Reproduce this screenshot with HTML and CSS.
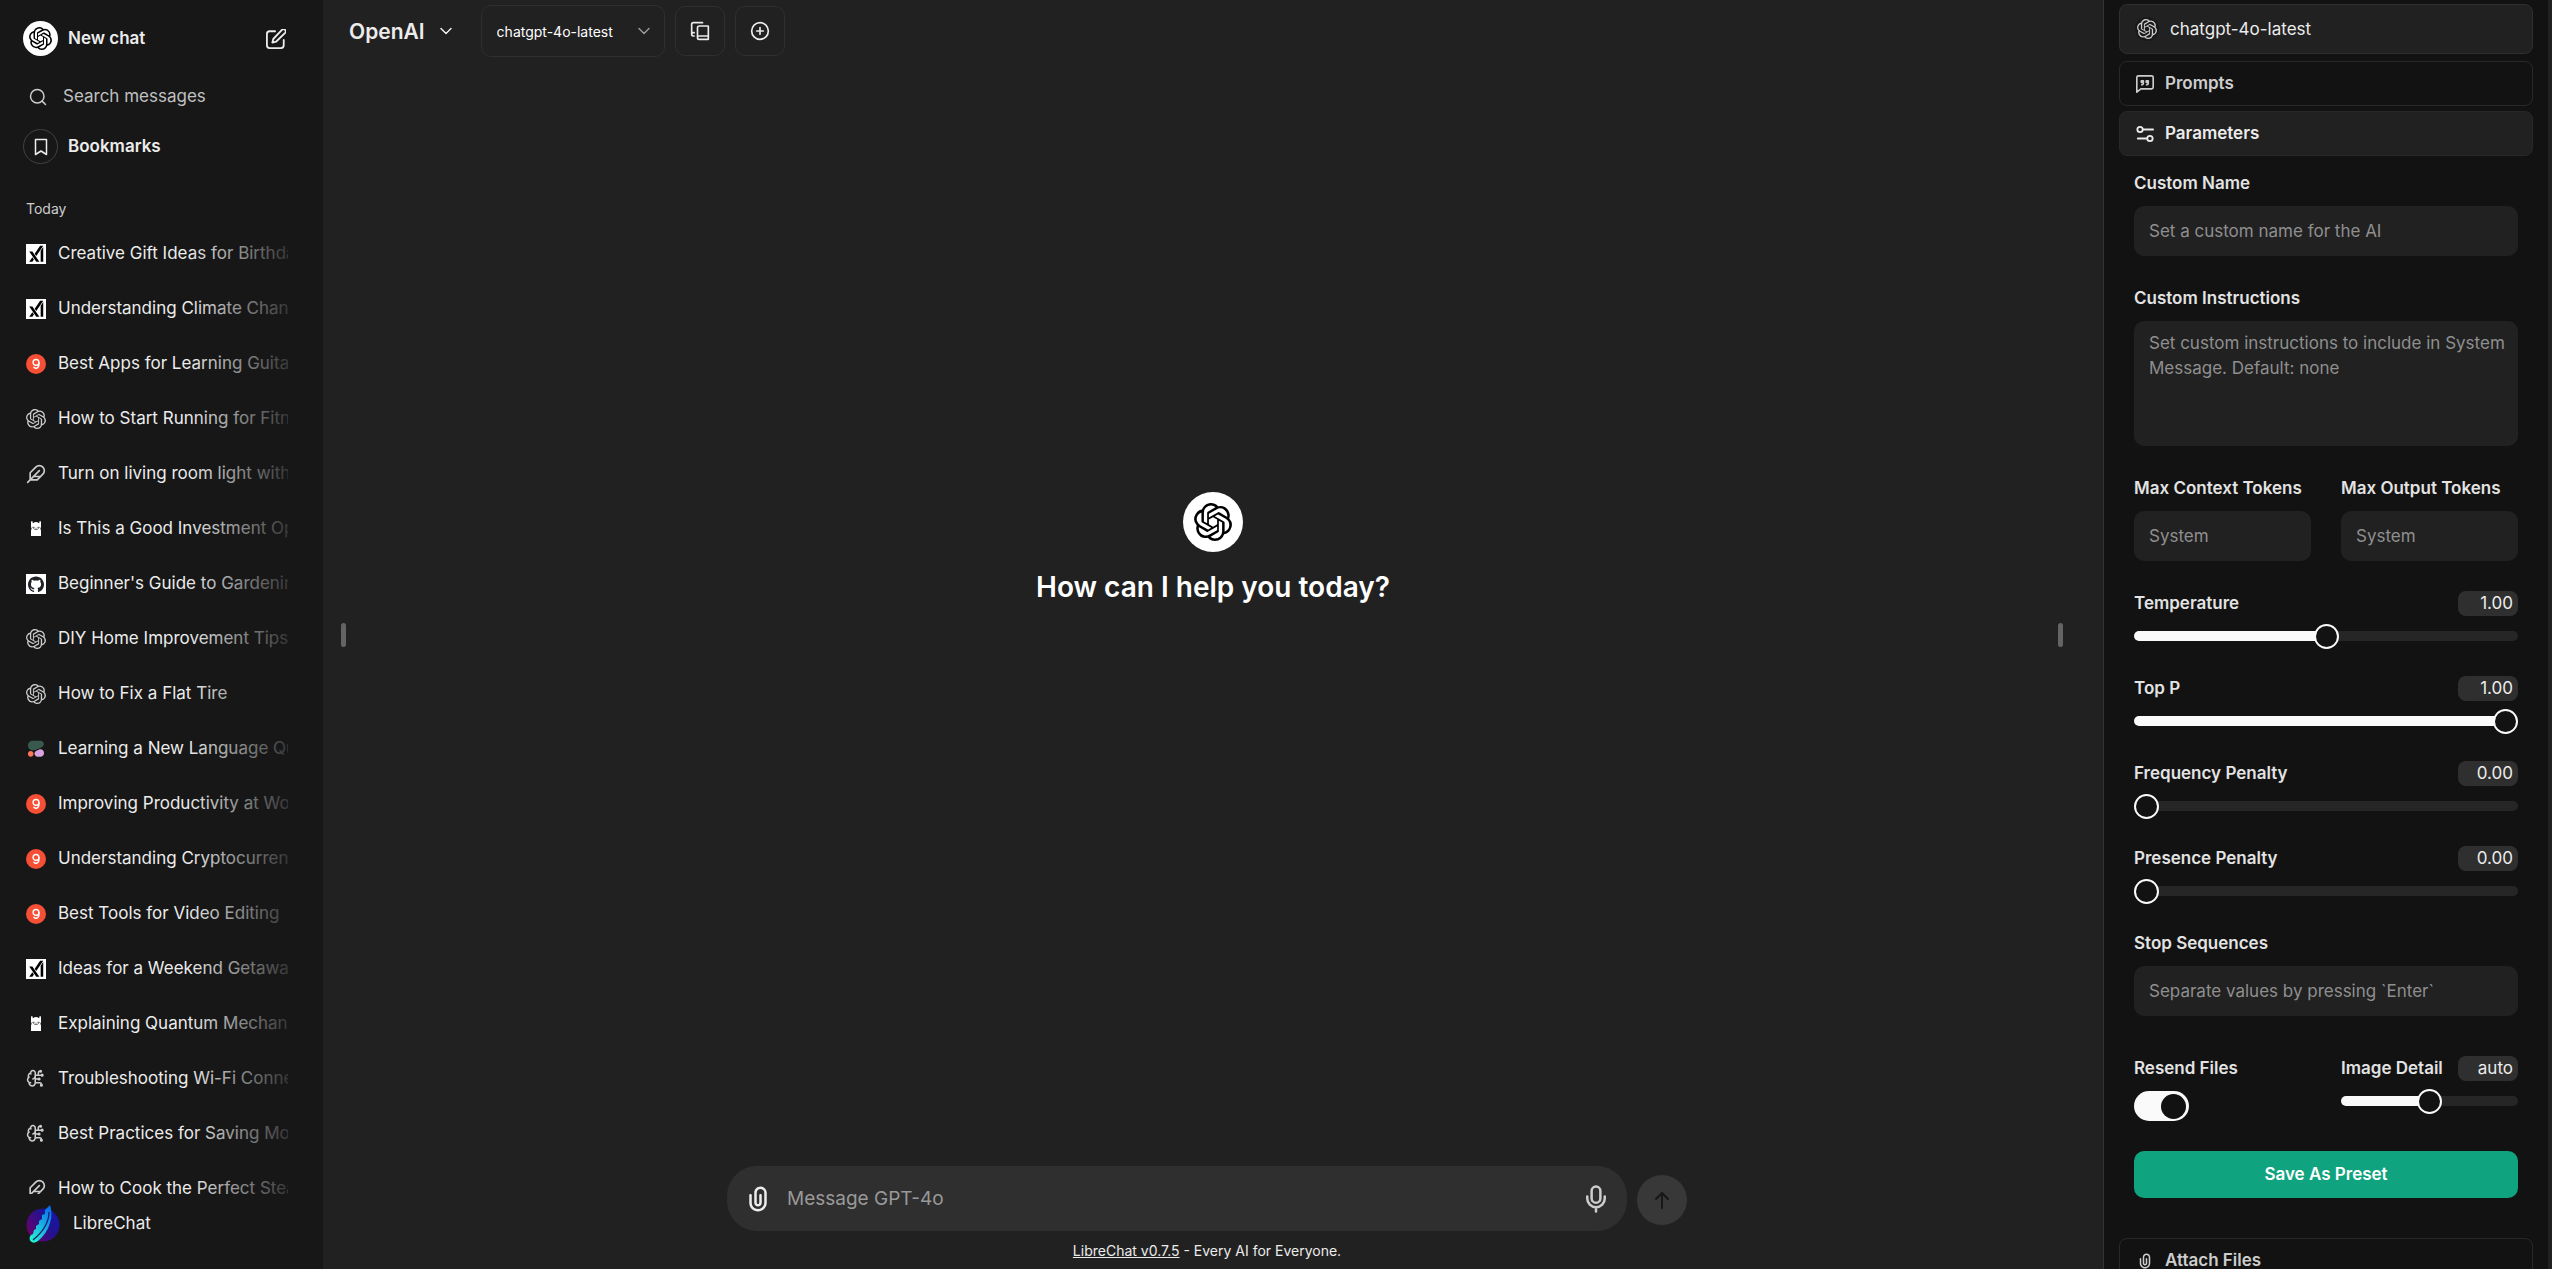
FILE: index.html
```html
<!DOCTYPE html>
<html lang="en">
<head>
<meta charset="utf-8">
<meta name="viewport" content="width=device-width, initial-scale=1">
<title>LibreChat</title>
<link rel="stylesheet" href="styles.css">
</head>
<body>
<svg class="sprite" aria-hidden="true">
  <defs>
    <linearGradient id="orb" x1="0" y1="0.8" x2="1" y2="0.2"><stop offset="0" stop-color="#70006a"/><stop offset="0.6" stop-color="#23128e"/><stop offset="1" stop-color="#1616a8"/></linearGradient>
    <linearGradient id="quill" x1="0.1" y1="1" x2="0.8" y2="0"><stop offset="0" stop-color="#21facf"/><stop offset="0.5" stop-color="#19b5e0"/><stop offset="1" stop-color="#0970ef"/></linearGradient>
  </defs>
  <symbol id="openai" viewBox="0 0 24 24"><path fill="currentColor" d="M22.2819 9.8211a5.9847 5.9847 0 0 0-.5157-4.9108 6.0462 6.0462 0 0 0-6.5098-2.9A6.0651 6.0651 0 0 0 4.9807 4.1818a5.9847 5.9847 0 0 0-3.9977 2.9 6.0462 6.0462 0 0 0 .7427 7.0966 5.98 5.98 0 0 0 .511 4.9107 6.051 6.051 0 0 0 6.5146 2.9001A5.9847 5.9847 0 0 0 13.2599 24a6.0557 6.0557 0 0 0 5.7718-4.2058 5.9894 5.9894 0 0 0 3.9977-2.9001 6.0557 6.0557 0 0 0-.7475-7.073zm-9.022 12.6081a4.4755 4.4755 0 0 1-2.8764-1.0408l.1419-.0804 4.7783-2.7582a.7948.7948 0 0 0 .3927-.6813v-6.7369l2.02 1.1686a.071.071 0 0 1 .038.052v5.5826a4.504 4.504 0 0 1-4.4945 4.4944zm-9.6607-4.1254a4.4708 4.4708 0 0 1-.5346-3.0137l.142.0852 4.783 2.7582a.7712.7712 0 0 0 .7806 0l5.8428-3.3685v2.3324a.0804.0804 0 0 1-.0332.0615L9.74 19.9502a4.4992 4.4992 0 0 1-6.1408-1.6464zM2.3408 7.8956a4.485 4.485 0 0 1 2.3655-1.9728V11.6a.7664.7664 0 0 0 .3879.6765l5.8144 3.3543-2.0201 1.1685a.0757.0757 0 0 1-.071 0l-4.8303-2.7865A4.504 4.504 0 0 1 2.3408 7.872zm16.5963 3.8558L13.1038 8.364 15.1192 7.2a.0757.0757 0 0 1 .071 0l4.8303 2.7913a4.4944 4.4944 0 0 1-.6765 8.1042v-5.6772a.79.79 0 0 0-.407-.667zm2.0107-3.0231l-.142-.0852-4.7735-2.7818a.7759.7759 0 0 0-.7854 0L9.409 9.2297V6.8974a.0662.0662 0 0 1 .0284-.0615l4.8303-2.7866a4.4992 4.4992 0 0 1 6.6802 4.66zM8.3065 12.863l-2.02-1.1638a.0804.0804 0 0 1-.038-.0567V6.0742a4.4992 4.4992 0 0 1 7.3757-3.4537l-.142.0805L8.704 5.459a.7948.7948 0 0 0-.3927.6813zm1.0976-2.3654l2.602-1.4998 2.6069 1.4998v2.9994l-2.5974 1.4997-2.6067-1.4997Z"/></symbol>
  <symbol id="xai" viewBox="0 0 24 24"><path fill="#fff" d="M0 0h24v24H0z"/><path fill="#000" transform="translate(2.2 1.2) scale(.84 .88)" d="M6.469 8.776L16.512 23h-4.464L2.005 8.776H6.47zm-.004 7.9l2.233 3.164L6.467 23H2l4.465-6.324zM22 2.582V23h-3.659V7.764L22 2.582zM22 1l-9.952 14.095-2.233-3.163L17.533 1H22z"/></symbol>
  <symbol id="groq" viewBox="0 0 20 20"><circle cx="10" cy="10" r="10" fill="#f55036"/><g fill="none" stroke="#fff" stroke-width="1.4" stroke-linecap="round"><circle cx="10" cy="8.4" r="2.9"/><path d="M12.9 8.4v2.9a2.9 2.9 0 0 1-5 2"/></g></symbol>
  <symbol id="feather" viewBox="0 0 24 24"><path d="M20.24 12.24a6 6 0 0 0-8.49-8.49L5 10.5V19h8.5zM16 8 2 22M17.5 15H9"/></symbol>
  <symbol id="llama" viewBox="0 0 20 20"><path fill="#fff" d="M5 2.5l1.3-.5.6 2.3a5 5 0 0 1 6.2 0l.6-2.3 1.3.5v5.2l-.6 2 .6 1.8v5.500H5v-5.500l.6-1.800-.6-2z"/><path d="M7 8.500c1 2.800 5 2.800 6 0" fill="none" stroke="#333" stroke-width=".7"/><path d="M6.500 8.300h2M11.500 8.300h2M9.500 9.200h1" stroke="#333" stroke-width=".8"/></symbol>
  <symbol id="github" viewBox="0 0 24 24"><path fill="#fff" d="M0 0h24v24H0z"/><path fill="#1f2328" transform="translate(2.400 2.800) scale(.8)" d="M12 .297c-6.63 0-12 5.373-12 12 0 5.303 3.438 9.8 8.205 11.385.6.113.82-.258.82-.577 0-.285-.01-1.04-.015-2.04-3.338.724-4.042-1.61-4.042-1.61C4.422 18.07 3.633 17.7 3.633 17.7c-1.087-.744.084-.729.084-.729 1.205.084 1.838 1.236 1.838 1.236 1.07 1.835 2.809 1.305 3.495.998.108-.776.417-1.305.76-1.605-2.665-.3-5.466-1.332-5.466-5.93 0-1.31.465-2.38 1.235-3.22-.135-.303-.54-1.523.105-3.176 0 0 1.005-.322 3.3 1.23.96-.267 1.98-.399 3-.405 1.02.006 2.04.138 3 .405 2.28-1.552 3.285-1.23 3.285-1.23.645 1.653.24 2.873.12 3.176.765.84 1.23 1.91 1.23 3.22 0 4.61-2.805 5.625-5.475 5.92.42.36.81 1.096.81 2.22 0 1.606-.015 2.896-.015 3.286 0 .315.21.69.825.57C20.565 22.092 24 17.592 24 12.297c0-6.627-5.373-12-12-12"/></symbol>
  <symbol id="cohere" viewBox="-9 -8 93 93"><path fill="#39594d" d="M24.300 44.700c2 0 6-.1 11.600-2.400 6.500-2.700 19.300-7.500 28.600-12.500 6.500-3.500 9.300-8.100 9.300-14.300C73.800 7 66.900 0 58.300 0h-36C10 0 0 10 0 22.300s9.400 22.400 24.300 22.400z"/><path fill="#d9a3e3" d="M30.400 60c0-6 3.600-11.500 9.200-13.800l11.300-4.700C62.400 36.800 75 45.200 75 57.600 75 67.200 67.200 75 57.600 75H45.300c-8.200 0-14.900-6.700-14.900-15z"/><path fill="#ff7759" d="M12.900 47.600C5.800 47.600 0 53.400 0 60.500v1.700C0 69.200 5.800 75 12.900 75c7.100 0 12.900-5.800 12.900-12.900v-1.700c-.1-7-5.800-12.800-12.900-12.800z"/></symbol>
  <symbol id="brain" viewBox="0 0 26 26"><path d="M12 5a3 3 0 1 0-5.997.125 4 4 0 0 0-2.526 5.770 4 4 0 0 0 .556 6.588A4 4 0 1 0 12 18ZM9 13a4.500 4.500 0 0 0 3-4M6.003 5.125A3 3 0 0 0 6.401 6.500M3.477 10.896a4 4 0 0 1 .585-.396M6 18a4 4 0 0 1-1.967-.516M12 13h4M12 18h6a2 2 0 0 1 2 2v1M12 8h8M16 8V5a2 2 0 0 1 2-2"/><circle cx="17" cy="13" r="1"/><circle cx="19" cy="3" r="1"/><circle cx="20" cy="21" r="1"/><circle cx="21" cy="8" r="1"/></symbol>
  <symbol id="chevron" viewBox="0 0 12 12"><path d="M1 3.500l5 5 5-5"/></symbol>
  <symbol id="clip" viewBox="0 0 24 24"><path fill="currentColor" stroke="none" fill-rule="evenodd" d="M9 7C9 4.23858 11.2386 2 14 2C16.7614 2 19 4.23858 19 7V15C19 18.866 15.866 22 12 22C8.13401 22 5 18.866 5 15V9C5 8.44772 5.44772 8 6 8C6.55228 8 7 8.44772 7 9V15C7 17.7614 9.23858 20 12 20C14.7614 20 17 17.7614 17 15V7C17 5.34315 15.6569 4 14 4C12.3431 4 11 5.34315 11 7V15C11 15.5523 11.4477 16 12 16C12.5523 16 13 15.5523 13 15V9C13 8.44772 13.4477 8 14 8C14.5523 8 15 8.44772 15 9V15C15 16.6569 13.6569 18 12 18C10.3431 18 9 16.6569 9 15V7Z"/></symbol>
</svg>

<div class="app">
  <nav class="sidebar" aria-label="Chats">
    <div class="nav-row">
      <a class="nav-link" href="#new"><span class="disc disc-white"><svg class="logo-sm"><use href="#openai"/></svg></span>New chat</a>
      <button class="bare" type="button" aria-label="Start new chat"><svg class="line icon-lg" viewBox="1 1 22 22"><path d="M11 3.500H5a3 3 0 0 0-3 3V19a3 3 0 0 0 3 3h12.500a3 3 0 0 0 3-3v-6M18.500 2a2.121 2.121 0 0 1 3.500 3.300L12 15l-4 1 1-4z"/></svg></button>
    </div>
    <label class="search"><svg class="line icon-md" viewBox="0 0 24 24"><circle cx="11" cy="11" r="9"/><path d="M22 22l-4.500-4.500"/></svg><input type="text" placeholder="Search messages" aria-label="Search messages"></label>
    <button class="nav-link bare bookmarks" type="button"><span class="disc"><svg class="line icon-md" viewBox="0 0 18 18"><path d="M3.500 1.500h11v15L9 13l-5.500 3.500z"/></svg></span>Bookmarks</button>
    <h2 class="group-title">Today</h2>
    <div class="chat-list">
      <a class="chat" href="#c1"><svg class="icon-lg"><use href="#xai"/></svg><span class="chat-title">Creative Gift Ideas for Birthday</span></a>
      <a class="chat" href="#c2"><svg class="icon-lg"><use href="#xai"/></svg><span class="chat-title">Understanding Climate Change</span></a>
      <a class="chat" href="#c3"><svg class="icon-lg"><use href="#groq"/></svg><span class="chat-title">Best Apps for Learning Guitar</span></a>
      <a class="chat" href="#c4"><svg class="icon-lg dim"><use href="#openai"/></svg><span class="chat-title">How to Start Running for Fitness</span></a>
      <a class="chat" href="#c5"><svg class="line icon-lg dim"><use href="#feather"/></svg><span class="chat-title">Turn on living room light with</span></a>
      <a class="chat" href="#c6"><svg class="icon-lg"><use href="#llama"/></svg><span class="chat-title">Is This a Good Investment Option</span></a>
      <a class="chat" href="#c7"><svg class="icon-lg"><use href="#github"/></svg><span class="chat-title">Beginner's Guide to Gardening</span></a>
      <a class="chat" href="#c8"><svg class="icon-lg dim"><use href="#openai"/></svg><span class="chat-title">DIY Home Improvement Tips</span></a>
      <a class="chat" href="#c9"><svg class="icon-lg dim"><use href="#openai"/></svg><span class="chat-title">How to Fix a Flat Tire</span></a>
      <a class="chat" href="#c10"><svg class="icon-lg"><use href="#cohere"/></svg><span class="chat-title">Learning a New Language Quickly</span></a>
      <a class="chat" href="#c11"><svg class="icon-lg"><use href="#groq"/></svg><span class="chat-title">Improving Productivity at Work</span></a>
      <a class="chat" href="#c12"><svg class="icon-lg"><use href="#groq"/></svg><span class="chat-title">Understanding Cryptocurrency</span></a>
      <a class="chat" href="#c13"><svg class="icon-lg"><use href="#groq"/></svg><span class="chat-title">Best Tools for Video Editing</span></a>
      <a class="chat" href="#c14"><svg class="icon-lg"><use href="#xai"/></svg><span class="chat-title">Ideas for a Weekend Getaway</span></a>
      <a class="chat" href="#c15"><svg class="icon-lg"><use href="#llama"/></svg><span class="chat-title">Explaining Quantum Mechanics</span></a>
      <a class="chat" href="#c16"><svg class="line icon-lg dim"><use href="#brain"/></svg><span class="chat-title">Troubleshooting Wi-Fi Connection</span></a>
      <a class="chat" href="#c17"><svg class="line icon-lg dim"><use href="#brain"/></svg><span class="chat-title">Best Practices for Saving Money</span></a>
      <a class="chat" href="#c18"><svg class="line icon-lg dim"><use href="#feather"/></svg><span class="chat-title">How to Cook the Perfect Steak</span></a>
    </div>
    <button class="account bare" type="button">
      <svg class="account-logo" viewBox="0 0 34 40"><circle cx="17" cy="21" r="16.500" fill="url(#orb)"/><path fill="url(#quill)" d="M24 1c2 6 2 12 0 18-2 7-6 13-12 18-3 2-5 2-6 1-3-1-3-5-1-7l2-1 1-4 2-1v-3l3-2v-3l3-2v-4l3-1v-4z"/><path d="M23 8c0 9-5 19-16 28" fill="none" stroke="#171766" stroke-width="1.200"/></svg>
      LibreChat
    </button>
  </nav>

  <main class="main">
    <header class="topbar">
      <button class="endpoint bare" type="button">OpenAI <svg class="line icon-xs"><use href="#chevron"/></svg></button>
      <div class="model">
        <select aria-label="Model"><option>chatgpt-4o-latest</option></select>
        <svg class="line icon-xs dimmer"><use href="#chevron"/></svg>
      </div>
      <button class="square" type="button" aria-label="Presets"><svg class="line icon-lg" viewBox="0 0 24 24"><path d="M2 16V4a2 2 0 0 1 2-2h11M22 18H11a2 2 0 1 0 0 4h10.500a.5.5 0 0 0 .5-.5v-15a.5.5 0 0 0-.5-.5H11a2 2 0 0 0-2 2v12M5 14H4a2 2 0 1 0 0 4h1"/></svg></button>
      <button class="square" type="button" aria-label="Add conversation"><svg class="line icon-lg" viewBox="0 0 24 24"><circle cx="12" cy="12" r="10"/><path d="M8 12h8M12 8v8"/></svg></button>
    </header>
    <section class="landing">
      <span class="disc-lg"><svg class="logo-lg"><use href="#openai"/></svg></span>
      <h1>How can I help you today?</h1>
    </section>
    <div class="dock">
      <form class="composer">
        <div class="message">
          <button class="bare" type="button" aria-label="Attach files"><svg class="icon-xl"><use href="#clip"/></svg></button>
          <input type="text" placeholder="Message GPT-4o" aria-label="Message GPT-4o">
          <button class="bare dim" type="button" aria-label="Use microphone"><svg class="line icon-xl" viewBox="0 0 24 24"><rect x="8.500" y="2" width="7" height="13" rx="3.500"/><path d="M19 10v1.500a7 7 0 0 1-14 0V10M12 19v3"/></svg></button>
        </div>
        <button class="send" type="button" aria-label="Send message"><svg class="line icon-lg" viewBox="0 0 20 20"><path d="M10 18V3M4 9l6-6 6 6"/></svg></button>
      </form>
      <footer class="credits"><a href="#librechat">LibreChat v0.7.5</a> - Every AI for Everyone.</footer>
    </div>
    <span class="handle handle-left"></span>
    <span class="handle handle-right"></span>
  </main>

  <aside class="panel" aria-label="Controls">
    <div class="picker"><span class="disc-xs"><svg class="icon-lg"><use href="#openai"/></svg></span><select aria-label="Assistant model"><option>chatgpt-4o-latest</option></select></div>
    <div class="sections">
      <button class="section" type="button"><svg class="line icon-md" viewBox="1 1 22 22"><path d="M22 16a2 2 0 0 1-2 2H7l-5 4V4a2 2 0 0 1 2-2h16a2 2 0 0 1 2 2zM8 13a2 2 0 0 0 2-2V8H7.500v2H10M14 13a2 2 0 0 0 2-2V8h-2.500v2H16"/></svg>Prompts</button>
      <button class="section section-open" type="button" aria-expanded="true"><svg class="line icon-md" viewBox="2 2 20 20"><path d="M21 7H10M14 17H4"/><circle cx="17.500" cy="17" r="3"/><circle cx="6.500" cy="7" r="3"/></svg>Parameters</button>
    </div>
    <div class="params">
      <div class="field wide"><label for="name">Custom Name</label><input class="box" id="name" type="text" placeholder="Set a custom name for the AI"></div>
      <div class="field wide"><label for="instructions">Custom Instructions</label><textarea class="box tall" id="instructions" placeholder="Set custom instructions to include in System Message. Default: none"></textarea></div>
      <div class="field"><label for="context">Max Context Tokens</label><input class="box" id="context" type="text" placeholder="System"></div>
      <div class="field"><label for="output">Max Output Tokens</label><input class="box" id="output" type="text" placeholder="System"></div>
      <div class="field wide">
        <div class="field-head"><label for="temp">Temperature</label><input class="pill" type="text" value="1.00" aria-label="Temperature value"></div>
        <input class="slider" id="temp" type="range" min="0" max="2" step="0.01" value="1" style="--fill:.5">
      </div>
      <div class="field wide">
        <div class="field-head"><label for="topp">Top P</label><input class="pill" type="text" value="1.00" aria-label="Top P value"></div>
        <input class="slider" id="topp" type="range" min="0" max="1" step="0.01" value="1" style="--fill:1">
      </div>
      <div class="field wide">
        <div class="field-head"><label for="freq">Frequency Penalty</label><input class="pill" type="text" value="0.00" aria-label="Frequency Penalty value"></div>
        <input class="slider" id="freq" type="range" min="0" max="2" step="0.01" value="0" style="--fill:0">
      </div>
      <div class="field wide">
        <div class="field-head"><label for="pres">Presence Penalty</label><input class="pill" type="text" value="0.00" aria-label="Presence Penalty value"></div>
        <input class="slider" id="pres" type="range" min="0" max="2" step="0.01" value="0" style="--fill:0">
      </div>
      <div class="field wide stops"><label for="stop">Stop Sequences</label><input class="box" id="stop" type="text" placeholder="Separate values by pressing `Enter`"></div>
      <div class="field"><label for="resend">Resend Files</label><input class="switch" id="resend" type="checkbox" role="switch" checked></div>
      <div class="field">
        <div class="field-head"><label for="detail">Image Detail</label><input class="pill" type="text" value="auto" aria-label="Image Detail value"></div>
        <input class="slider" id="detail" type="range" min="0" max="2" value="1" style="--fill:.5">
      </div>
      <button class="save wide" type="button">Save As Preset</button>
    </div>
    <button class="section attach" type="button"><svg class="icon-md"><use href="#clip"/></svg>Attach Files</button>
  </aside>
</div>
</body>
</html>
```
FILE: styles.css
```css
:root {
  --side: #171717;
  --surface: #212121;
  --raised: #2f2f2f;
  --panel: #121212;
  --text: #ececec;
  --muted: #cdcdcd;
  --faint: #999;
}

* { box-sizing: border-box; }

body {
  margin: 0;
  background: var(--surface);
  color: var(--text);
  font: 400 17px/25px Inter, "Liberation Sans", sans-serif;
}

button, input, select, textarea {
  margin: 0;
  font: inherit;
  color: inherit;
}

input, textarea { outline: none; }
button { cursor: pointer; }
a { color: inherit; }
svg { display: block; flex: none; }
.sprite { position: absolute; width: 0; height: 0; }

.line {
  fill: none;
  stroke: currentColor;
  stroke-width: 2;
  stroke-linecap: round;
  stroke-linejoin: round;
}
.icon-xs { width: 12px; height: 12px; stroke-width: 1.5; }
.icon-md { width: 18px; height: 18px; }
.icon-lg { width: 20px; height: 20px; }
.icon-xl { width: 30px; height: 30px; }
.dim { color: var(--muted); }
.dimmer { color: var(--faint); }

.bare { padding: 0; border: 0; background: none; }

.app {
  display: flex;
  height: 100vh;
  overflow: hidden;
}

/* Sidebar */
.sidebar {
  display: flex;
  flex-direction: column;
  flex: none;
  width: 323px;
  padding: 21px 35px 0 23px;
  background: var(--side);
}
.nav-row { display: flex; align-items: center; justify-content: space-between; padding-right: 2px; }
.nav-link {
  display: flex;
  align-items: center;
  gap: 10px;
  font-weight: 600;
  text-decoration: none;
}
.disc, .disc-lg {
  display: grid;
  place-items: center;
  width: 35px;
  height: 35px;
  border: 1px solid #424242;
  border-radius: 50%;
}
.disc .icon-md { stroke-width: 1.5; }
.disc-white { border: 0; background: #fff; color: #000; }
.logo-sm { width: 23px; height: 23px; }
.search {
  display: flex;
  align-items: center;
  gap: 16px;
  height: 45px;
  margin-top: 18px;
  padding-left: 6px;
  color: var(--muted);
}
.search input { flex: 1; min-width: 0; padding: 0; border: 0; background: none; }
.search input::placeholder { color: #c0c0c0; opacity: 1; }
.bookmarks { margin-top: 10px; }
.group-title { margin: 32px 3px 5px; font-size: 14px; font-weight: 400; color: var(--muted); }
.chat-list { flex: 1; min-height: 0; overflow: hidden; padding-left: 3px; }
.chat {
  display: flex;
  align-items: center;
  gap: 12px;
  height: 55px;
  text-decoration: none;
}
.chat-title {
  position: relative;
  flex: 1;
  min-width: 0;
  overflow: hidden;
  white-space: nowrap;
}
.chat-title::after {
  content: "";
  position: absolute;
  inset: 0 0 0 auto;
  width: 100px;
  background: linear-gradient(to right, rgba(23, 23, 23, 0), rgba(23, 23, 23, .85));
}
.account {
  display: flex;
  gap: 13px;
  height: 75px;
  padding: 10px 0 0 3px;
  line-height: 38px;
}
.account-logo { width: 34px; height: 40px; }

/* Conversation area */
.main { position: relative; display: flex; flex-direction: column; flex: 1; min-width: 0; }
.topbar { display: flex; align-items: center; gap: 10px; padding: 5px 26px; }
.endpoint { display: flex; align-items: center; gap: 15px; margin-right: 19px; font-size: 21px; font-weight: 600; }
.model {
  display: flex;
  align-items: center;
  width: 184px;
  height: 52px;
  padding: 0 14px 0 15px;
  border: 1px solid var(--raised);
  border-radius: 10px;
  font-size: 14px;
  color: #fff;
}
select { flex: 1; min-width: 0; padding: 0; border: 0; background: none; appearance: none; }
.square {
  display: grid;
  place-items: center;
  width: 50px;
  height: 50px;
  border: 1px solid var(--raised);
  border-radius: 10px;
  background: none;
}
.landing {
  display: flex;
  flex-direction: column;
  align-items: center;
  justify-content: center;
  flex: 1;
  gap: 15px;
  padding-bottom: 130px;
}
.disc-lg { width: 60px; height: 60px; border: 0; background: #fff; color: #000; }
.logo-lg { width: 38px; height: 38px; }
h1 { margin: 0; font-size: 28px; line-height: 40px; font-weight: 600; color: #fff; }

/* Grips of the resizable columns, laid over the conversation */
.handle {
  position: absolute;
  top: calc(50% - 12px);
  width: 5px;
  height: 24px;
  border-radius: 3px;
  background: #646464;
}
.handle-left { left: 18px; }
.handle-right { right: 40px; }

.dock { padding-right: 12px; }
.composer {
  display: flex;
  align-items: flex-end;
  gap: 10px;
  width: 100%;
  max-width: 960px;
  margin: 0 auto;
}
.message {
  display: flex;
  align-items: center;
  flex: 1;
  gap: 14px;
  height: 65px;
  padding: 0 16px;
  border-radius: 30px;
  background: var(--raised);
}
.message input { flex: 1; min-width: 0; padding: 0; border: 0; background: none; font-size: 19px; }
.message input::placeholder { color: var(--faint); opacity: 1; }
.send {
  display: grid;
  place-items: center;
  width: 50px;
  height: 50px;
  margin-bottom: 6px;
  border: 0;
  border-radius: 50%;
  background: #383838;
  color: #171717;
}
.credits { padding: 7px 0 6px; font-size: 14px; text-align: center; }

/* Controls panel */
.panel {
  display: flex;
  flex-direction: column;
  flex: 0 0 449px;
  padding: 4px 15px 0;
  border-left: 1px solid #333;
  border-right: 4px solid var(--surface);
  background: var(--panel);
  overflow: hidden;
}
.picker {
  display: flex;
  align-items: center;
  flex: none;
  gap: 11px;
  height: 50px;
  padding: 0 15px;
  border: 1px solid var(--raised);
  border-radius: 8px;
  background: var(--surface);
}
.disc-xs { display: grid; place-items: center; width: 24px; height: 24px; border-radius: 50%; background: #191919; color: var(--muted); }
.sections { display: grid; gap: 5px; margin-top: 7px; }
.section {
  display: flex;
  align-items: center;
  flex: none;
  gap: 11px;
  height: 45px;
  padding: 0 16px;
  border: 1px solid #282828;
  border-radius: 8px;
  background: none;
  font-weight: 600;
  color: var(--muted);
}
.section-open { background: var(--surface); color: var(--text); }
.params {
  display: grid;
  grid-template-columns: 1fr 1fr;
  gap: 30px;
  padding: 15px 15px 40px;
}
.field { display: flex; flex-direction: column; gap: 10px; min-width: 0; }
.wide { grid-column: 1 / -1; }
.field label { font-weight: 600; color: #e3e3e3; white-space: nowrap; }
.field-head { display: flex; justify-content: space-between; }
.stops { margin-bottom: 10px; }
.box {
  width: 100%;
  height: 50px;
  padding: 10px 8px 10px 15px;
  border: 0;
  border-radius: 10px;
  background: var(--surface);
  resize: none;
}
.box::placeholder { color: #8f8f8f; opacity: 1; }
.tall { height: 125px; }
.pill {
  width: 60px;
  height: 25px;
  padding: 0 5px 0 0;
  border: 0;
  border-radius: 8px;
  background: var(--raised);
  text-align: right;
}
.slider {
  appearance: none;
  width: 100%;
  height: 20px;
  margin: 0;
  background: none;
}
.slider::-webkit-slider-runnable-track {
  height: 10px;
  border-radius: 5px;
  background: linear-gradient(to right, #fafafa calc(12px * min(1, var(--fill) * 9) + (100% - 25px) * var(--fill)), #262626 0);
}
.slider::-webkit-slider-thumb {
  appearance: none;
  width: 25px;
  height: 25px;
  margin-top: -7px;
  border: 2px solid #fafafa;
  border-radius: 50%;
  background: var(--panel);
}
.switch {
  appearance: none;
  display: flex;
  justify-content: flex-end;
  align-items: center;
  width: 55px;
  height: 30px;
  padding: 0 3px;
  border-radius: 15px;
  background: #fafafa;
}
.switch::before { content: ""; width: 25px; height: 25px; border-radius: 50%; background: var(--panel); }
.save {
  height: 47px;
  border: 0;
  border-radius: 10px;
  background: #0fa47f;
  font-weight: 600;
  color: #fff;
}
```
